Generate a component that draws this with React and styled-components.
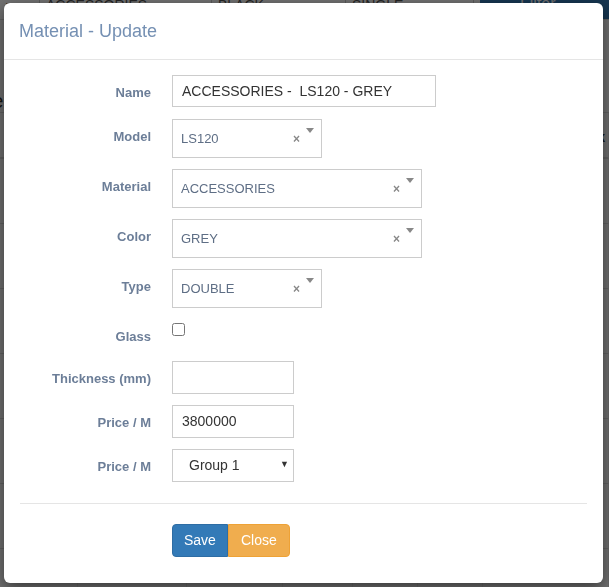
import React from "react";
import styled, { createGlobalStyle } from "styled-components";

const GlobalStyle = createGlobalStyle`
  body {
    margin: 0;
    font-family: "Liberation Sans", Arial, sans-serif;
    font-size: 14px;
    color: #333;
    overflow: hidden;
  }
  * {
    box-sizing: border-box;
  }
`;

/* ---- page behind the modal ---- */

const Page = styled.div`
  width: 609px;
  height: 587px;
  background: #fff;
  overflow: hidden;
`;

const FilterBar = styled.div`
  display: grid;
  grid-template-columns: 40px 172px 134px 128px 6px 1fr;
  height: 34px;
  margin-top: -14px;
  border-bottom: 1px solid #ddd;
`;

const FilterCell = styled.div`
  display: flex;
  align-items: flex-end;
  justify-content: space-between;
  padding: 0 6px 6px;
  border-right: 1px solid #ccc;
  font-size: 14px;
  color: #555;
`;

const FilterButton = styled.div`
  background: #337ab7;
  color: #fff;
  display: flex;
  align-items: flex-end;
  padding: 0 0 6px 40px;
  font-size: 16px;
`;

const Heading = styled.div`
  height: 93px;
  padding: 70px 0 0 0;
  margin-left: -40px;
  font-size: 20px;
  border-bottom: 1px solid #ddd;
`;

const Table = styled.div`
  display: grid;
  grid-template-columns: 78px 109px 96px 70px 65px 65px 1fr;
`;

const Cell = styled.div`
  height: ${(p) => (p.$head ? 46 : 65)}px;
  padding: ${(p) => (p.$head ? "16px 3px" : "36px 6px 0")};
  border-bottom: ${(p) => (p.$head ? "2px" : "1px")} solid #ddd;
  border-right: 1px solid #eee;
  font-weight: ${(p) => (p.$head ? 700 : 400)};
  font-size: ${(p) => (p.$head ? 14 : 13)}px;
  white-space: nowrap;
  overflow: hidden;
  text-overflow: clip;
  text-align: ${(p) => (p.$end ? "right" : "left")};
`;

const Backdrop = styled.div`
  position: fixed;
  inset: 0;
  background: rgba(0, 0, 0, 0.56);
`;

/* ---- modal ---- */

const Modal = styled.div`
  position: fixed;
  top: 3px;
  left: 4px;
  width: 599px;
  background: #fff;
  border-radius: 6px;
  box-shadow: 0 5px 15px rgba(0, 0, 0, 0.5);
`;

const Header = styled.div`
  padding: 16px 15px 14px;
  border-bottom: 1px solid #e5e5e5;
`;

const Title = styled.h4`
  margin: 0;
  font-size: 18px;
  font-weight: 400;
  line-height: 1.42857;
  color: #7590b3;
`;

const Body = styled.div`
  padding: 15px 16px 26px;
`;

const Row = styled.div`
  display: grid;
  grid-template-columns: 131px 1fr;
  column-gap: 21px;
  align-items: start;
  height: ${(p) => p.$h}px;
  margin-bottom: ${(p) => p.$mb}px;
`;

const Label = styled.label`
  text-align: right;
  font-size: 13px;
  font-weight: 700;
  line-height: 20px;
  padding-top: 8px;
  color: #6c7e98;
`;

const TextInput = styled.input`
  width: ${(p) => p.$w}px;
  height: ${(p) => p.$h}px;
  border: 1px solid #ccc;
  border-radius: 0;
  padding: 0 9px;
  font-family: inherit;
  font-size: 14px;
  color: #333;
  outline: none;
`;

const Select2 = styled.div`
  position: relative;
  width: ${(p) => p.$w}px;
  height: 39px;
  border: 1px solid #ccc;
  display: flex;
  align-items: center;
  padding: 0 8px;
  font-size: 13px;
  color: #5e6e85;
`;

const Clear = styled.span`
  position: absolute;
  right: 21px;
  top: 12px;
  font-size: 12px;
  font-weight: 700;
  color: #888;
`;

const Arrow = styled.span`
  position: absolute;
  right: 7px;
  top: 8px;
  border-left: 4px solid transparent;
  border-right: 4px solid transparent;
  border-top: 5px solid #888;
`;

const Check = styled.input`
  margin: 4px 0 0;
  width: 13px;
  height: 13px;
`;

const SelectWrap = styled.div`
  position: relative;
  width: 122px;
  height: 33px;
`;

const Select = styled.select`
  appearance: none;
  width: 100%;
  height: 100%;
  border: 1px solid #ccc;
  border-radius: 0;
  background: #fff;
  padding: 0 16px;
  font-family: inherit;
  font-size: 14px;
  color: #333;
  outline: none;
`;

const Caret = styled.span`
  position: absolute;
  right: 5px;
  top: 10px;
  font-size: 9px;
  color: #333;
  pointer-events: none;
`;

const Divider = styled.hr`
  margin: 21px 0 20px;
  border: 0;
  border-top: 1px solid #e5e5e5;
`;

const Actions = styled.div`
  display: flex;
  padding-left: 152px;
`;

const Button = styled.button`
  height: 33px;
  padding: 0 ${(p) => p.$px}px;
  font-family: inherit;
  font-size: 14px;
  color: #fff;
  background: ${(p) => p.$bg};
  border: 1px solid ${(p) => p.$bd};
  border-radius: ${(p) => p.$radius};
  cursor: pointer;
`;

const ComboBox = ({ value, width }) => (
  <Select2 $w={width}>
    {value}
    <Clear>×</Clear>
    <Arrow />
  </Select2>
);

const lastRow = ["LS120", "ACCESSORIES", "ACCESSORIES", "BLACK", "DOUBLE", "380000", ""];
const headers = ["", "", "", "", "", "", "Stock"];

export default function App() {
  return (
    <>
      <GlobalStyle />
      <Page>
        <FilterBar>
          <FilterCell>▾</FilterCell>
          <FilterCell>
            ACCESSORIES <span>▾</span>
          </FilterCell>
          <FilterCell>
            BLACK <span>▾</span>
          </FilterCell>
          <FilterCell>
            SINGLE <span>▾</span>
          </FilterCell>
          <div />
          <FilterButton>Filter</FilterButton>
        </FilterBar>
        <Heading>Type</Heading>
        <Table>
          {headers.map((h, i) => (
            <Cell key={"h" + i} $head $end={i === 6}>
              {h}
            </Cell>
          ))}
          {Array.from({ length: 7 }).map((_, r) =>
            lastRow.map((c, i) => (
              <Cell key={r + "-" + i}>{r === 6 ? c : ""}</Cell>
            ))
          )}
        </Table>
      </Page>
      <Backdrop />
      <Modal>
        <Header>
          <Title>Material - Update</Title>
        </Header>
        <Body>
          <Row $h={32} $mb={12}>
            <Label>Name</Label>
            <TextInput $w={264} $h={32} defaultValue="ACCESSORIES -  LS120 - GREY" />
          </Row>
          <Row $h={39} $mb={11}>
            <Label>Model</Label>
            <ComboBox value="LS120" width={150} />
          </Row>
          <Row $h={39} $mb={11}>
            <Label>Material</Label>
            <ComboBox value="ACCESSORIES" width={250} />
          </Row>
          <Row $h={39} $mb={11}>
            <Label>Color</Label>
            <ComboBox value="GREY" width={250} />
          </Row>
          <Row $h={39} $mb={11}>
            <Label>Type</Label>
            <ComboBox value="DOUBLE" width={150} />
          </Row>
          <Row $h={30} $mb={12}>
            <Label>Glass</Label>
            <Check type="checkbox" />
          </Row>
          <Row $h={33} $mb={11}>
            <Label>Thickness (mm)</Label>
            <TextInput $w={122} $h={33} />
          </Row>
          <Row $h={33} $mb={11}>
            <Label>Price / M</Label>
            <TextInput $w={122} $h={33} defaultValue="3800000" />
          </Row>
          <Row $h={33} $mb={0}>
            <Label>Price / M</Label>
            <SelectWrap>
              <Select defaultValue="1">
                <option value="1">Group 1</option>
                <option value="2">Group 2</option>
              </Select>
              <Caret>▼</Caret>
            </SelectWrap>
          </Row>
          <Divider />
          <Actions>
            <Button $px={11} $bg="#337ab7" $bd="#2e6da4" $radius="4px 0 0 4px">
              Save
            </Button>
            <Button $px={12} $bg="#f0ad4e" $bd="#eea236" $radius="0 4px 4px 0">
              Close
            </Button>
          </Actions>
        </Body>
      </Modal>
    </>
  );
}
